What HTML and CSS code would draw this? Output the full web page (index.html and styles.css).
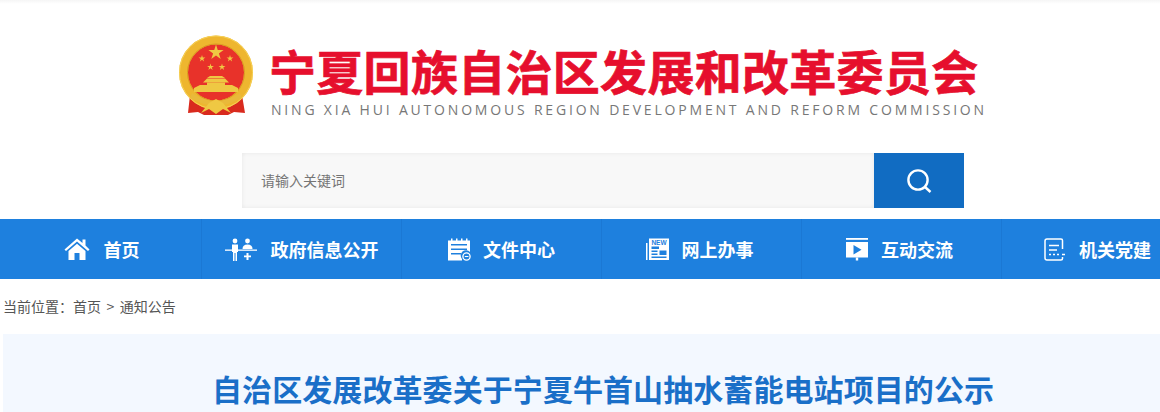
FILE: index.html
```html
<!DOCTYPE html>
<html lang="zh-CN">
<head>
    <meta charset="UTF-8">
    <title>自治区发展改革委关于宁夏牛首山抽水蓄能电站项目的公示</title>
    <link rel="stylesheet" href="styles.css">
</head>
<body>
    <!-- 头部 -->
    <header class="header">
        <div class="logo">
            <svg class="emblem" width="76" height="81" viewBox="0 0 76 81">
                <defs>
                    <polygon id="star" points="0,-1 .22,-.31 .95,-.31 .36,.12 .59,.81 0,.38 -.59,.81 -.36,.12 -.95,-.31 -.22,-.31"/>
                </defs>
                <path d="M12 60 L10 78 L20 77 L26 80 L50 80 L56 77 L67 78 L64 60 Z" fill="#d92a1e"/>
                <circle cx="38" cy="37.5" r="32.500" fill="#e8322a" stroke="#eeb62f" stroke-width="9"/>
                <circle cx="38" cy="37.500" r="36.500" fill="none" stroke="#f7d257" stroke-width="1"/>
                <circle cx="38" cy="37.500" r="28.500" fill="none" stroke="#d99a22" stroke-width="1"/>
                <g fill="#efc843">
                    <use href="#star" transform="translate(38 17.500) scale(8)"/>
                    <use href="#star" transform="translate(24 23.500) scale(3.600)"/>
                    <use href="#star" transform="translate(52 23.500) scale(3.600)"/>
                    <use href="#star" transform="translate(32.500 32) scale(3.600)"/>
                    <use href="#star" transform="translate(44 32) scale(3.600)"/>
                    <path d="M29 43 L32 41 H44 L47 43 Z"/>
                    <path d="M25 47.500 L29 43.500 H47 L51 47.500 Z"/>
                    <rect x="29" y="47.500" width="18" height="2.500"/>
                    <path d="M16 57 V53 L22 50 H54 L60 53 V57 Z"/>
                    <path d="M14 58 Q38 74 62 58 L64 63 Q38 78 12 63 Z" fill="#e9b93a"/>
                    <path d="M23 78 L31 68 L38 64 L45 68 L53 78 L45 74 L38 79 L31 74 Z"/>
                </g>
            </svg>
            <div class="logo-text">
                <div class="logo-cn">宁夏回族自治区发展和改革委员会</div>
                <div class="logo-en">NING XIA HUI AUTONOMOUS REGION DEVELOPMENT AND REFORM COMMISSION</div>
            </div>
        </div>

        <!-- 搜索 -->
        <div class="search">
            <div class="search-input">请输入关键词</div>
            <div class="search-btn">
                <svg width="26" height="26" viewBox="0 0 26 26" fill="none" stroke="#fff" stroke-width="2.4">
                    <circle cx="12" cy="12" r="9.6"/>
                    <path d="M19 19 L24.5 24"/>
                </svg>
            </div>
        </div>
    </header>

    <!-- 导航 -->
    <nav class="nav">
        <a class="nav-item">
            <svg width="26" height="22" viewBox="0 0 26 22" fill="#fff">
                <path d="M0.5 11.5 L13 0.5 L18.5 5 V1.5 H21.5 V7.6 L25.5 11.5 L24 13 L13 3.6 L2 13 Z"/>
                <path d="M4.5 13 L13 5.8 L21.5 13 V22 H15.5 V15 H10.5 V22 H4.5 Z"/>
            </svg>
            <span>首页</span>
        </a>
        <a class="nav-item">
            <svg width="32" height="23" viewBox="0 0 32 23" fill="#fff">
                <circle cx="10" cy="3" r="2.4"/>
                <path d="M7 6.5 H13 V14 H12 V23 H10.5 V15 H9.5 V23 H8 V14 H7 Z"/>
                <circle cx="22.5" cy="3" r="2.4"/>
                <path d="M17.5 11 Q17.5 6.5 22.5 6.5 Q27.5 6.5 27.5 11 Z"/>
                <rect x="0" y="11.5" width="32" height="1.3"/>
                <path d="M21.5 15 H23.5 V17.5 H26 V19.3 H23.5 V22 H21.5 V19.3 H19 V17.5 H21.5 Z"/>
            </svg>
            <span>政府信息公开</span>
        </a>
        <a class="nav-item nav-item-tight">
            <svg width="23" height="23" viewBox="0 0 23 23" fill="#fff">
                <path d="M0 2.5 H3 V0.5 H4.5 V2.5 H8 V0.5 H9.5 V2.5 H13 V0.5 H14.5 V2.5 H18 V0.5 H19.500 V2.5 H22 V14 A5 5 0 0 0 14 21 V22.500 H0 Z M3 6 V7.500 H19 V6 Z M3 10.500 V12 H19 V10.500 Z M3 15 V16.500 H13 V15 Z"/>
                <circle cx="18.5" cy="18.500" r="3.600" fill="none" stroke="#fff" stroke-width="1.300"/>
                <rect x="16.800" y="18" width="3.600" height="1"/>
            </svg>
            <span>文件中心</span>
        </a>
        <a class="nav-item nav-item-left">
            <svg width="23" height="22" viewBox="0 0 23 22" fill="#fff">
                <path d="M0 5 H1.500 V22 H0 Z"/>
                <path d="M3 0.500 H23 V22 H3 Z M5.500 8.500 V11 H13 V8.500 Z M5.500 12.500 V14 H11.500 V12.500 Z M5.500 15.500 V17 H11.500 V15.500 Z M5.500 18.500 V20 H20.500 V18.500 Z M13.500 12.500 V17 H20.500 V12.500 Z" fill-rule="evenodd"/>
                <text x="13" y="6.500" class="new-text" text-anchor="middle">NEW</text>
            </svg>
            <span>网上办事</span>
        </a>
        <a class="nav-item nav-item-left">
            <svg width="22" height="23" viewBox="0 0 22 23" fill="#fff">
                <rect x="0" y="0" width="22" height="1.800"/>
                <path d="M0 4 H22 V19.500 H0 Z M7.500 7 V16.500 L15.500 11.800 Z" fill-rule="evenodd"/>
                <rect x="9.800" y="19.500" width="2.400" height="3"/>
            </svg>
            <span>互动交流</span>
        </a>
        <a class="nav-item">
            <svg width="22" height="23" viewBox="0 0 22 23" fill="none" stroke="#fff" stroke-width="1.500">
                <path d="M18.500 11 V2.500 Q18.500 1 17 1 H3 Q1 1 1 3 V20 Q1 22 3 22 H17 Q18.500 22 18.500 20.500 V19"/>
                <path d="M5 7.500 H15 M5 12 H13"/>
                <path d="M5 16.500 H7 M9 16.500 H11 M13 16.500 H15 M18 16.500 H21" stroke-width="1.600"/>
            </svg>
            <span>机关党建</span>
        </a>
    </nav>

    <!-- 当前位置 -->
    <div class="crumb">当前位置：<a>首页</a><span class="crumb-sep">&gt;</span><a>通知公告</a></div>

    <!-- 正文 -->
    <main class="article">
        <h1 class="article-title">自治区发展改革委关于宁夏牛首山抽水蓄能电站项目的公示</h1>
    </main>
</body>
</html>
```

FILE: styles.css
```css
/* 基础 */
html, body {
    margin: 0;
    padding: 0;
    height: 412px;
    overflow: hidden;
}

body {
    background: #fff;
    font-family: "Noto Sans CJK SC", "Liberation Sans", sans-serif;
    color: #555;
}

/* 头部 */
.header {
    height: 219px;
    background: linear-gradient(#f5f5f5, #fff 4px);
    overflow: hidden;
}

.logo {
    display: flex;
    align-items: flex-start;
    margin: 35px 0 0 178px;
}

.emblem {
    flex: none;
}

.logo-text {
    margin-left: 15px;
}

.logo-cn {
    font-size: 47px;
    line-height: 47px;
    height: 47px;
    margin-top: 11px;
    font-weight: 700;
    letter-spacing: 0.3px;
    color: #e60f2d;
    white-space: nowrap;
    -webkit-text-stroke: 0.7px #e60f2d;
}

.logo-en {
    font-family: "Open Sans", sans-serif;
    font-size: 14px;
    line-height: 18px;
    margin: 8px 0 0 2px;
    letter-spacing: 2.81px;
    color: #777;
    white-space: nowrap;
}

/* 搜索 */
.search {
    display: flex;
    width: 722px;
    height: 55px;
    margin: 34px 0 0 242px;
}

.search-input {
    flex: 1;
    padding-left: 19px;
    line-height: 55px;
    font-size: 14px;
    color: #757575;
    background: #f8f8f8;
    box-shadow: inset 0 0 4px #e6e6e6;
}

.search-btn {
    display: flex;
    align-items: center;
    justify-content: center;
    width: 90px;
    background: #116cc2;
}

/* 导航 */
.nav {
    display: flex;
    height: 60px;
    padding-left: 2px;
    background: #1e80de;
}

.nav-item {
    display: flex;
    flex: none;
    align-items: center;
    justify-content: center;
    gap: 14px;
    box-sizing: border-box;
    width: 200px;
    border-right: 1px solid #1b78d4;
    color: #fff;
    font-size: 18px;
    font-weight: 700;
    white-space: nowrap;
}

.nav-item-tight {
    gap: 12px;
}

.nav-item-left {
    gap: 13px;
    padding-right: 4px;
}

.nav-item:last-child {
    border-right: none;
    width: 158px;
    justify-content: flex-start;
    padding-left: 42px;
    gap: 13px;
}

.new-text {
    font-family: "Liberation Sans", sans-serif;
    font-size: 6.5px;
    font-weight: 700;
    fill: #1e80de;
}

/* 当前位置 */
.crumb {
    height: 55px;
    padding-left: 3px;
    font-size: 14px;
    line-height: 54px;
    color: #555;
}

.crumb-sep {
    margin: 0 5.5px;
}

/* 正文 */
.article {
    height: 78px;
    margin-left: 3px;
    background: #f3f8ff;
}

.article-title {
    margin: 0;
    padding-top: 32px;
    padding-left: 209px;
    font-size: 30px;
    line-height: 44px;
    font-weight: 700;
    letter-spacing: 0.08px;
    color: #1a6fc8;
    white-space: nowrap;
}
```
